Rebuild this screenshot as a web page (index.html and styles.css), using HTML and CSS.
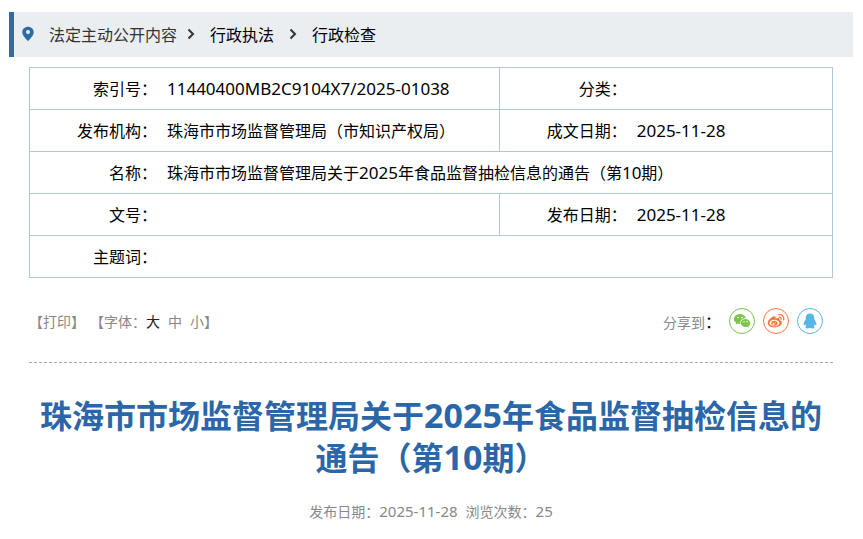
FILE: index.html
```html
<!DOCTYPE html>
<html lang="zh-CN">
<head>
    <meta charset="UTF-8">
    <meta name="viewport" content="width=device-width, initial-scale=1.0">
    <title>珠海市市场监督管理局关于2025年食品监督抽检信息的通告（第10期）</title>
    <link rel="stylesheet" href="styles.css">
</head>
<body>
    <nav class="crumbs">
        <svg class="pin" viewBox="0 0 12 16">
            <path fill-rule="evenodd" d="M6 .8C2.800.8.3 3.200.3 6.200c0 3.500 3.600 6.300 5.700 9 2.100-2.700 5.700-5.500 5.700-9C11.700 3.200 9.200.8 6 .8zm0 3.200a2 2 0 1 1 0 4 2 2 0 0 1 0-4z"/>
        </svg>
        <a class="root" href="#">法定主动公开内容</a>
        <svg class="arrow" viewBox="0 0 8 12"><path d="M1.500 1.500 6 6l-4.500 4.500"/></svg>
        <a href="#">行政执法</a>
        <svg class="arrow" viewBox="0 0 8 12"><path d="M1.500 1.500 6 6l-4.500 4.500"/></svg>
        <a href="#">行政检查</a>
    </nav>

    <main class="content">
        <table class="info">
            <colgroup>
                <col class="col-label">
                <col class="col-wide">
                <col class="col-label">
                <col>
            </colgroup>
            <tr>
                <th>索引号：</th>
                <td><span class="num">11440400MB2C9104X7/2025-01038</span></td>
                <th class="split">分类：</th>
                <td></td>
            </tr>
            <tr>
                <th>发布机构：</th>
                <td>珠海市市场监督管理局（市知识产权局）</td>
                <th class="split">成文日期：</th>
                <td><span class="num">2025-11-28</span></td>
            </tr>
            <tr>
                <th>名称：</th>
                <td colspan="3">珠海市市场监督管理局关于<span class="num">2025</span>年食品监督抽检信息的通告（第<span class="num">10</span>期）</td>
            </tr>
            <tr>
                <th>文号：</th>
                <td></td>
                <th class="split">发布日期：</th>
                <td><span class="num">2025-11-28</span></td>
            </tr>
            <tr>
                <th>主题词：</th>
                <td colspan="3"></td>
            </tr>
        </table>

        <div class="tools">
            <div class="tools-left">
                <button type="button">【打印】</button>
                <div class="font-size">
                    <span>【字体：</span><button type="button" class="active">大</button>
                    <button type="button">中</button>
                    <span><button type="button">小</button>】</span>
                </div>
            </div>
            <div class="share">
                <span class="share-label">分享到<b>：</b></span>
                <a class="wechat" href="#" aria-label="微信">
                    <svg viewBox="0 0 18 16">
                        <path fill="currentColor" d="M7 1C3.600 1 1 3.200 1 6c0 1.600.8 2.900 2.100 3.800L2.600 11.600l2.100-1c.7.2 1.500.3 2.300.3h.4C6.700 7.600 9.300 5.300 12.700 5.300h.2C12.300 2.800 9.900 1 7 1z"/>
                        <path fill="currentColor" d="M17.200 9.900c0-2.200-2.100-4-4.700-4s-4.700 1.800-4.700 4 2.100 4 4.700 4c.6 0 1.100-.1 1.600-.2l1.800.9-.5-1.500c1.100-.8 1.800-1.900 1.800-3.200z"/>
                        <g fill="#fff"><circle cx="5" cy="4.600" r=".8"/><circle cx="9" cy="4.600" r=".8"/><circle cx="11" cy="8.800" r=".7"/><circle cx="14.200" cy="8.800" r=".7"/></g>
                    </svg>
                </a>
                <a class="weibo" href="#" aria-label="微博">
                    <svg viewBox="0 0 18 16">
                        <path fill="currentColor" d="M7.300 3.200C8.700 3 9 4 8.600 5.400c1.900-.8 4.400-.8 3.900 1.500 1.400.4 2.300 1.300 2.300 2.600 0 2.700-3.500 4.900-7.400 4.900S.7 12.500.7 10c0-2.900 4-6.500 6.600-6.800z"/>
                        <ellipse cx="7.400" cy="10" rx="4.900" ry="3.200" fill="#fff"/>
                        <ellipse cx="7.300" cy="10.300" rx="3.100" ry="2.500" fill="currentColor"/>
                        <circle cx="6.500" cy="10.900" r="1" fill="#fff"/><circle cx="8.300" cy="9.800" r=".5" fill="#fff"/>
                        <g fill="none" stroke="currentColor" stroke-width="1.300" stroke-linecap="round"><path d="M11.800 1.700c3.400-.6 5.600 2 4.700 5.200"/><path d="M12.100 4.100c1.500-.2 2.400.8 2 2.200"/></g>
                    </svg>
                </a>
                <a class="qq" href="#" aria-label="QQ">
                    <svg viewBox="0 0 18 16">
                        <path fill="currentColor" d="M9 .5c-2.800 0-4.300 2-4.300 4.600v1.300C3.500 8 2.600 9.600 2.600 11.200c0 1.500.8 1.300 1.600.1.200.7.600 1.300 1.100 1.800-1.500.7-1.200 2.400 1 2.400 1.200 0 2.100-.3 2.700-.8.600.5 1.500.8 2.700.8 2.200 0 2.500-1.700 1-2.400.5-.5.9-1.100 1.100-1.800.8 1.200 1.600 1.400 1.600-.1 0-1.600-.9-3.200-2.100-4.800V5.100C13.300 2.500 11.800.5 9 .5z"/>
                    </svg>
                </a>
            </div>
        </div>

        <article>
            <h1>珠海市市场监督管理局关于<span class="num">2025</span>年食品监督抽检信息的通告（第<span class="num">10</span>期）</h1>
            <p class="meta">
                <span>发布日期：<span class="num">2025-11-28</span></span>
                <span>浏览次数：<span class="num">25</span></span>
            </p>
        </article>
    </main>
</body>
</html>
```
FILE: styles.css
```css
* {
    margin: 0;
    padding: 0;
    box-sizing: border-box;
}

body {
    padding: 12px 10px 0 9px;
    background: #fff;
    color: #000;
    font-family: "Noto Sans CJK SC", sans-serif;
    font-size: 16px;
}

a {
    color: inherit;
    text-decoration: none;
}

button {
    border: none;
    background: none;
    color: inherit;
    font: inherit;
    cursor: pointer;
}

/* latin digits run slightly larger than the chinese text */
.num {
    font-family: "Noto Sans", sans-serif;
    font-size: 17px;
    line-height: 1;
}

.crumbs {
    display: flex;
    align-items: center;
    gap: 15px;
    height: 45px;
    padding: 0 0 2px 8px;
    border-left: 5px solid #2e6da4;
    background: #ebeef1;
}

.pin {
    width: 12px;
    height: 16px;
    fill: #2e6da4;
}

.crumbs .root {
    margin-right: -5px;
    color: #333;
}

.arrow {
    width: 8px;
    height: 12px;
    fill: none;
    stroke: #333;
    stroke-width: 2;
}

.content {
    padding: 10px 20px 0;
}

.info {
    width: 100%;
    border: 1px solid #b0c8dc;
    border-collapse: collapse;
    table-layout: fixed;
}

.col-label {
    width: 16%;
}

.col-wide {
    width: 42.5%;
}

.info th,
.info td {
    height: 42px;
    padding-bottom: 2px;
    border-top: 1px solid #b0c8dc;
    line-height: 24px;
}

.info th {
    padding-right: 1px;
    font-weight: normal;
    text-align: right;
}

.info td {
    padding-left: 9px;
    text-align: left;
}

.info .split {
    border-left: 1px solid #b0c8dc;
}

.tools {
    display: flex;
    justify-content: space-between;
    align-items: center;
    height: 85px;
    padding-top: 2px;
    border-bottom: 1px dashed #aaa;
    color: #888;
    font-size: 14px;
}

.tools-left {
    display: flex;
    gap: 5px;
}

.font-size {
    display: flex;
    gap: 8px;
}

.font-size .active {
    margin-left: -8px;
    color: #222;
}

.share {
    display: flex;
    align-items: center;
    gap: 8px;
    padding-right: 10px;
}

.share-label b {
    color: #000;
    font-size: 16px;
    font-weight: normal;
}

.share a {
    display: flex;
    justify-content: center;
    align-items: center;
    width: 26px;
    height: 26px;
    border: 1px solid currentColor;
    border-radius: 50%;
}

.share svg {
    width: 18px;
    height: 16px;
}

.share .wechat {
    color: #7bc549;
}

.share .weibo {
    color: #ff763b;
}

.share .qq {
    color: #56b6e7;
}

h1 {
    padding-top: 30px;
    color: #2b67a8;
    font-size: 32px;
    line-height: 42px;
    text-align: center;
}

h1 .num {
    font-size: 34px;
}

.meta {
    display: flex;
    justify-content: center;
    gap: 8px;
    padding-top: 24px;
    color: #888;
    font-size: 14px;
    line-height: 20px;
}

.meta .num {
    font-size: 15px;
}
```
